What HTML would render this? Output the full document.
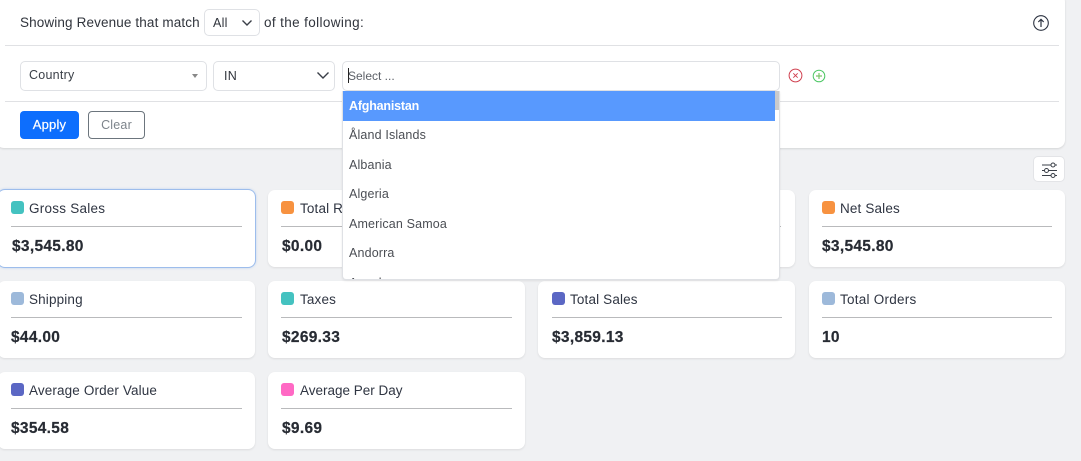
<!DOCTYPE html>
<html><head><meta charset="utf-8"><style>
html,body{margin:0;padding:0;width:1081px;height:461px;overflow:hidden;background:#f0f1f3;font-family:"Liberation Sans",sans-serif;color:#2b3240}
div,span{position:absolute;box-sizing:border-box;white-space:nowrap}
svg{position:absolute}
.panel{left:-4px;top:-6px;width:1069px;height:154px;background:#fff;border-radius:8px;box-shadow:0 1px 2px rgba(0,0,0,.12)}
.hr{left:5px;width:1054px;height:1px;background:#e0e1e4}
.t{font-size:13.5px;line-height:18px;letter-spacing:.25px;color:#30343c}
.box{background:#fff;border:1px solid #dfe1e5;border-radius:5px}
.card{width:257px;height:77px;background:#fff;border-radius:7px;box-shadow:0 1px 2px rgba(0,0,0,.09)}
.sw{left:11px;top:11px;width:13px;height:13px;border-radius:3px}
.lb{left:30px;top:10px;font-size:13.5px;line-height:18px;letter-spacing:.15px;color:#2f3542}
.ln{left:11px;top:36px;width:231px;height:1px;background:#b9babc}
.v{left:12px;top:48px;font-size:15.5px;line-height:18px;font-weight:bold;letter-spacing:.3px;color:#272b33;-webkit-text-stroke:.2px #272b33}
.opt{left:349px;font-size:12.5px;line-height:16px;letter-spacing:.15px;color:#4b4e54}
</style></head><body>
<div class="panel"></div>
<div class="t" style="left:20px;top:14px;letter-spacing:.13px">Showing Revenue that match</div>
<div class="box" style="left:204px;top:9px;width:56px;height:27px"></div>
<div class="t" style="left:213px;top:14px;font-size:12.5px">All</div>
<svg style="left:241px;top:19px" width="12" height="8" viewBox="0 0 12 8"><path d="M1.5 1.5L6 6l4.500-4.500" fill="none" stroke="#3a3f48" stroke-width="1.400"/></svg>
<div class="t" style="left:264px;top:14px;letter-spacing:.37px">of the following:</div>
<svg style="left:1032px;top:14px" width="18" height="18" viewBox="0 0 18 18"><circle cx="9" cy="9" r="7.300" fill="none" stroke="#2b3240" stroke-width="1.100"/><path d="M9 13V5.500M6.300 8L9 5.300 11.700 8" fill="none" stroke="#2b3240" stroke-width="1.200"/></svg>
<div class="hr" style="top:45px"></div>

<div class="box" style="left:20px;top:61px;width:187px;height:30px"></div>
<div class="t" style="left:29px;top:66px;font-size:12.500px;color:#3b4048">Country</div>
<svg style="left:192px;top:74px" width="6" height="5" viewBox="0 0 6 5"><path d="M0 0h6L3 4z" fill="#888"/></svg>
<div class="box" style="left:213px;top:61px;width:122px;height:30px"></div>
<div class="t" style="left:224px;top:67px;font-size:12.500px;color:#30343c">IN</div>
<svg style="left:316px;top:71px" width="14" height="9" viewBox="0 0 14 9"><path d="M1.500 1.500L7 7l5.500-5.500" fill="none" stroke="#3a3f48" stroke-width="1.400"/></svg>
<div class="box" style="left:342px;top:61px;width:438px;height:30px"></div>
<div style="left:348px;top:68px;width:1px;height:15px;background:#222"></div>
<div class="t" style="left:348px;top:67px;font-size:12px;color:#5d6168;letter-spacing:0">Select ...</div>
<svg style="left:788px;top:68px" width="15" height="15" viewBox="0 0 15 15"><circle cx="7.500" cy="7.500" r="6.400" fill="none" stroke="#d0404f" stroke-width="1"/><path d="M5.300 5.300l4.400 4.400M9.700 5.300l-4.400 4.400" stroke="#d0404f" stroke-width=".9"/></svg>
<svg style="left:812px;top:69px" width="14" height="14" viewBox="0 0 14 14"><circle cx="7" cy="7" r="5.800" fill="none" stroke="#4cc764" stroke-width="1"/><path d="M7 4v6M4 7h6" stroke="#7cc46a" stroke-width="1.200"/></svg>
<div class="hr" style="top:101px"></div>
<div style="left:20px;top:111px;width:59px;height:28px;background:#0d6efd;border-radius:4px;color:#fff;font-size:13px;line-height:28px;text-align:center;letter-spacing:.2px;-webkit-text-stroke:.2px #fff">Apply</div>
<div style="left:88px;top:111px;width:57px;height:28px;border:1px solid #6c757d;border-radius:4px;color:#7d848b;font-size:12.500px;line-height:26px;text-align:center;letter-spacing:.2px">Clear</div>

<div class="box" style="left:1033px;top:156px;width:32px;height:26px;border-color:#e3e4e7"></div>
<svg style="left:1041px;top:162px" width="17" height="16" viewBox="0 0 17 16"><path d="M1 3h15M1 8.500h15M1 13.500h15" stroke="#3a3f48" stroke-width="1"/><circle cx="12" cy="3" r="2" fill="#fff" stroke="#3a3f48"/><circle cx="5.500" cy="8.500" r="2" fill="#fff" stroke="#3a3f48"/><circle cx="12" cy="13.500" r="2" fill="#fff" stroke="#3a3f48"/></svg>

<div class="card" style="left:-2px;top:190px;box-shadow:0 0 0 1px #9dbdec,0 0 3px #8fb6ea"><div class="sw" style="left:13px;background:#44c2c0"></div><div class="lb" style="left:31px;letter-spacing:.25px">Gross Sales</div><div class="ln" style="left:13px"></div><div class="v" style="left:14px">$3,545.80</div></div>
<div class="card" style="left:268px;top:190px"><div class="sw" style="background:#f79240;left:13px"></div><div class="lb" style="left:32px">Total Refunds</div><div class="ln" style="left:13px"></div><div class="v" style="left:14px">$0.00</div></div>
<div class="card" style="left:538px;top:190px"><div class="ln" style="left:13px;width:230px"></div></div>
<div class="card" style="left:809px;top:190px;width:256px"><div class="sw" style="background:#f79240;left:13px"></div><div class="lb" style="left:31px">Net Sales</div><div class="ln" style="left:13px;width:230px"></div><div class="v" style="left:13px">$3,545.80</div></div>

<div class="card" style="left:-2px;top:281px"><div class="sw" style="background:#9db9da;left:13px"></div><div class="lb" style="left:31px">Shipping</div><div class="ln" style="left:13px"></div><div class="v" style="left:13px">$44.00</div></div>
<div class="card" style="left:268px;top:281px"><div class="sw" style="background:#44c2c0;left:13px"></div><div class="lb" style="left:32px">Taxes</div><div class="ln" style="left:13px"></div><div class="v" style="left:14px">$269.33</div></div>
<div class="card" style="left:538px;top:281px"><div class="sw" style="background:#5b67c4;left:14px"></div><div class="lb" style="left:32px">Total Sales</div><div class="ln" style="left:14px;width:230px"></div><div class="v" style="left:14px">$3,859.13</div></div>
<div class="card" style="left:809px;top:281px;width:256px"><div class="sw" style="background:#9db9da;left:13px"></div><div class="lb" style="left:31px;letter-spacing:.25px">Total Orders</div><div class="ln" style="left:13px;width:230px"></div><div class="v" style="left:13px">10</div></div>

<div class="card" style="left:-2px;top:372px"><div class="sw" style="background:#5b67c4;left:13px"></div><div class="lb" style="left:31px;letter-spacing:.13px">Average Order Value</div><div class="ln" style="left:13px"></div><div class="v" style="left:13px">$354.58</div></div>
<div class="card" style="left:268px;top:372px"><div class="sw" style="background:#ff69c4;left:13px"></div><div class="lb" style="left:32px;letter-spacing:0">Average Per Day</div><div class="ln" style="left:13px"></div><div class="v" style="left:14px">$9.69</div></div>

<div style="left:342px;top:91px;width:438px;height:189px;background:#fff;border:1px solid #dfe1e5;border-top:0;border-radius:0 0 4px 4px;overflow:hidden;box-shadow:0 1px 2px rgba(0,0,0,.08)">
<div style="left:0;top:0;width:432px;height:30px;background:#5899fe"></div>
<div style="left:432px;top:0;width:4px;height:19px;background:#c9cacc"></div>
<div class="opt" style="left:6px;top:7px;color:#fff;font-weight:bold;letter-spacing:-.2px">Afghanistan</div>
<div class="opt" style="left:6px;top:36px">Åland Islands</div>
<div class="opt" style="left:6px;top:66px">Albania</div>
<div class="opt" style="left:6px;top:95px">Algeria</div>
<div class="opt" style="left:6px;top:125px">American Samoa</div>
<div class="opt" style="left:6px;top:154px">Andorra</div>
<div class="opt" style="left:6px;top:184px">Angola</div>
</div>
</body></html>
